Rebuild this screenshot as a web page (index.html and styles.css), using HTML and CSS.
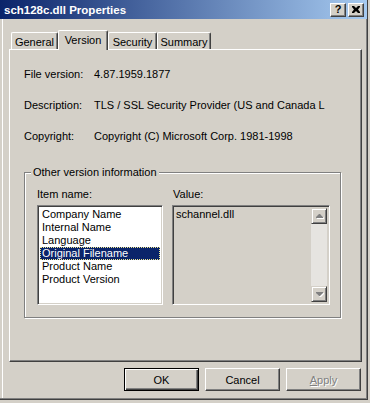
FILE: index.html
```html
<!DOCTYPE html>
<html lang="en">
<head>
  <meta charset="UTF-8">
  <title>sch128c.dll Properties</title>
  <link rel="stylesheet" href="styles.css">
</head>
<body>
  <div class="window">
    <div class="titlebar">
      <span class="title">sch128c.dll Properties</span>
      <div class="caption-btns">
        <span class="cap help">?</span>
        <span class="cap close">
          <svg width="8" height="7" viewBox="0 0 8 7"><path d="M0 0h2l2 2 2-2h2v1L6 3.5 8 6v1H6L4 5 2 7H0V6l2-2.5L0 1z" fill="#000"/></svg>
        </span>
      </div>
    </div>
    <div class="client">
      <div class="tabs">
        <div class="tab w-general">General</div>
        <div class="tab active w-version">Version</div>
        <div class="tab w-security">Security</div>
        <div class="tab w-summary">Summary</div>
      </div>
      <div class="panel">
        <div class="props">
          <div class="prop"><span class="key">File version:</span><span>4.87.1959.1877</span></div>
          <div class="prop"><span class="key">Description:</span><span>TLS / SSL Security Provider (US and Canada L</span></div>
          <div class="prop"><span class="key">Copyright:</span><span>Copyright (C) Microsoft Corp. 1981-1998</span></div>
        </div>
        <fieldset class="group">
          <legend>Other version information</legend>
          <div class="cols">
            <div class="col names">
              <div class="col-label">Item name:</div>
              <div class="listbox">
                <div class="item">Company Name</div>
                <div class="item">Internal Name</div>
                <div class="item">Language</div>
                <div class="item selected"><span>Original Filename</span></div>
                <div class="item">Product Name</div>
                <div class="item">Product Version</div>
              </div>
            </div>
            <div class="col values">
              <div class="col-label">Value:</div>
              <div class="valuebox">
                <div class="value-text">schannel.dll</div>
                <div class="scrollbar">
                  <div class="sb-btn">
                    <svg width="7" height="4" viewBox="0 0 7 4"><path d="M3 0h1l3 3v1H0V3z" fill="#808080"/></svg>
                  </div>
                  <div class="sb-track"></div>
                  <div class="sb-btn">
                    <svg width="7" height="4" viewBox="0 0 7 4"><path d="M0 0h7v1L4 4H3L0 1z" fill="#808080"/></svg>
                  </div>
                </div>
              </div>
            </div>
          </div>
        </fieldset>
      </div>
      <div class="actions">
        <button class="btn default">OK</button>
        <button class="btn">Cancel</button>
        <button class="btn disabled"><u>A</u>pply</button>
      </div>
    </div>
  </div>
</body>
</html>
```

FILE: styles.css
```css
*, *::before, *::after { box-sizing: border-box; }
html, body {
  margin: 0;
  padding: 0;
  background: #d4d0c8;
  font-family: 'Liberation Sans', Arial, sans-serif;
  font-size: 11px;
  color: #000;
}
.window {
  width: 368px;
  height: 400px;
  display: flex;
  flex-direction: column;
  background: #d4d0c8;
  border-right: 1px solid #404040;
  border-bottom: 1px solid #404040;
  box-shadow: inset -1px -1px 0 #808080, inset 2px 0 0 #d4d0c8, inset 3px 0 0 #fff;
}
.titlebar {
  height: 19px;
  display: flex;
  align-items: center;
  justify-content: space-between;
  padding: 0 3px 0 4px;
  background: linear-gradient(to right, #0a246a, #a6caf0);
}
.title {
  color: #fff;
  font-weight: bold;
  font-size: 11.5px;
}
.caption-btns {
  display: flex;
  gap: 2px;
}
.cap {
  width: 16px;
  height: 14px;
  display: flex;
  align-items: center;
  justify-content: center;
  background: #d4d0c8;
  border-top: 1px solid #fff;
  border-left: 1px solid #fff;
  border-right: 1px solid #404040;
  border-bottom: 1px solid #404040;
  box-shadow: inset -1px -1px 0 #808080;
  font-weight: bold;
  font-size: 11px;
  line-height: 1;
}
.client {
  flex: 1;
  display: flex;
  flex-direction: column;
  padding: 11px 5px 0 9px;
}
.tabs {
  display: flex;
  align-items: flex-end;
  padding-left: 2px;
  height: 19px;
  position: relative;
  z-index: 1;
}
.tab {
  height: 17px;
  display: flex;
  align-items: center;
  justify-content: center;
  border-top: 1px solid #fff;
  border-left: 1px solid #fff;
  border-right: 1px solid #404040;
  border-radius: 2px 2px 0 0;
  box-shadow: inset -1px 0 0 #808080;
  background: #d4d0c8;
  padding-top: 1px;
}
.tab.active {
  height: 20px;
  margin-bottom: -1px;
  padding-bottom: 3px;
}
.w-general { width: 47px; }
.w-version { width: 50px; }
.w-security { width: 49px; }
.w-summary { width: 54px; }
.panel {
  height: 313px;
  border-top: 1px solid #fff;
  border-left: 1px solid #fff;
  border-right: 1px solid #404040;
  border-bottom: 1px solid #404040;
  box-shadow: inset -1px -1px 0 #808080;
  padding: 18px 0 0 14px;
}
.props {
  display: flex;
  flex-direction: column;
  gap: 18px;
}
.prop {
  display: flex;
  line-height: 13px;
  white-space: nowrap;
}
.key { width: 70px; }
.group {
  margin: 23px 0 0 0;
  width: 317px;
  padding: 0 10px 12px 12px;
  border: 1px solid #808080;
  box-shadow: inset 1px 1px 0 #fff, 1px 1px 0 #fff;
}
.group legend {
  margin-left: -6px;
  padding: 0 2px;
  line-height: 13px;
  background: #d4d0c8;
}
.cols {
  display: flex;
  gap: 9px;
  margin-top: 9px;
}
.col-label {
  line-height: 13px;
  margin-bottom: 4px;
}
.values .col-label { padding-left: 1px; }
.listbox,
.valuebox {
  height: 100px;
  border-top: 1px solid #808080;
  border-left: 1px solid #808080;
  border-right: 1px solid #fff;
  border-bottom: 1px solid #fff;
  box-shadow: inset 1px 1px 0 #404040, inset -1px -1px 0 #d4d0c8;
}
.listbox {
  width: 126px;
  background: #fff;
  padding: 2px 2px;
}
.item {
  line-height: 13px;
  padding-left: 2px;
  white-space: nowrap;
}
.item.selected {
  background: #0a246a;
  color: #fff;
  outline: 1px dotted #f0e890;
  outline-offset: -1px;
}
.valuebox {
  width: 158px;
  display: flex;
  padding: 2px;
  background: #d4d0c8;
}
.value-text {
  flex: 1;
  line-height: 13px;
  padding-left: 1px;
}
.scrollbar {
  width: 16px;
  display: flex;
  flex-direction: column;
}
.sb-btn {
  height: 16px;
  display: flex;
  align-items: center;
  justify-content: center;
  background: #d4d0c8;
  border-top: 1px solid #d4d0c8;
  border-left: 1px solid #d4d0c8;
  border-right: 1px solid #404040;
  border-bottom: 1px solid #404040;
  box-shadow: inset 1px 1px 0 #fff, inset -1px -1px 0 #808080;
}
.sb-btn svg { filter: drop-shadow(1px 1px 0 #fff); }
.sb-track {
  flex: 1;
  background: #e6e4e0;
}
.actions {
  display: flex;
  justify-content: flex-end;
  gap: 6px;
  margin-top: 6px;
  padding-right: 1px;
}
.btn {
  width: 75px;
  height: 23px;
  font-family: inherit;
  font-size: 11px;
  color: #000;
  background: #d4d0c8;
  border-top: 1px solid #fff;
  border-left: 1px solid #fff;
  border-right: 1px solid #404040;
  border-bottom: 1px solid #404040;
  box-shadow: inset -1px -1px 0 #808080;
  padding: 0;
}
.btn.default {
  border: 1px solid #000;
  box-shadow: inset 1px 1px 0 #fff, inset -1px -1px 0 #404040, inset -2px -2px 0 #808080;
}
.btn.disabled {
  color: #808080;
  text-shadow: 1px 1px 0 #fff;
}
```
